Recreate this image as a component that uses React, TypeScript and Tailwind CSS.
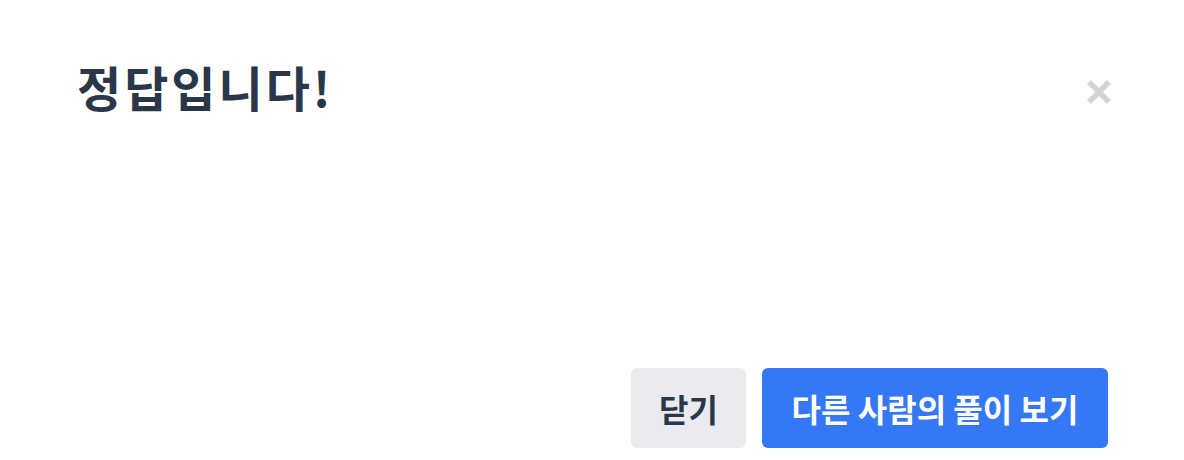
import React from "react";

const App = () => {
  return (
    <div
      className="w-[1184px] h-[460px] bg-white flex flex-col px-[76px] pt-[46px] pb-[12px]"
      style={{ fontFamily: '"Noto Sans CJK KR", "Noto Sans", sans-serif' }}
    >
      <div className="flex items-start justify-between">
        <h1 className="text-[48px] leading-[80px] font-bold text-[#2a3749] tracking-[3px] ml-[1px]">
          정답입니다!
        </h1>
        <button className="mt-[32px] mr-[-5px] w-[28px] h-[28px] flex items-center justify-center">
          <svg width="28" height="28" viewBox="0 0 28 28">
            <path
              d="M4 4 L24 24 M24 4 L4 24"
              stroke="#d4d4d4"
              strokeWidth="5.5"
              strokeLinecap="butt"
            />
          </svg>
        </button>
      </div>
      <div className="flex-1" />
      <div className="flex justify-end gap-4">
        <button className="h-20 w-[115px] rounded-md bg-[#e9ebf0] text-[#2a3749] text-[32px] font-bold">
          닫기
        </button>
        <button className="h-20 w-[346px] rounded-md bg-[#3578f6] text-white text-[32px] font-bold">
          다른 사람의 풀이 보기
        </button>
      </div>
    </div>
  );
};

export default App;
